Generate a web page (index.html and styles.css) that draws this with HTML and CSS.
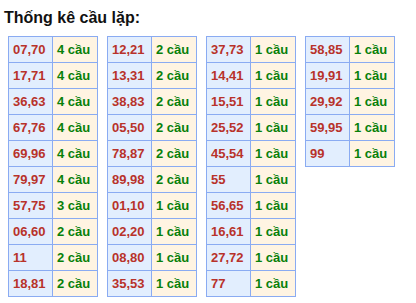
FILE: index.html
```html
<!DOCTYPE html>
<html lang="vi">
<head>
<meta charset="utf-8">
<link rel="stylesheet" href="styles.css">
</head>
<body>
<h3 class="title">Thống kê cầu lặp:</h3>
<div class="tables">
  <table class="stat">
    <tr><td class="num">07,70</td><td class="cnt">4 cầu</td></tr>
    <tr><td class="num">17,71</td><td class="cnt">4 cầu</td></tr>
    <tr><td class="num">36,63</td><td class="cnt">4 cầu</td></tr>
    <tr><td class="num">67,76</td><td class="cnt">4 cầu</td></tr>
    <tr><td class="num">69,96</td><td class="cnt">4 cầu</td></tr>
    <tr><td class="num">79,97</td><td class="cnt">4 cầu</td></tr>
    <tr><td class="num">57,75</td><td class="cnt">3 cầu</td></tr>
    <tr><td class="num">06,60</td><td class="cnt">2 cầu</td></tr>
    <tr><td class="num">11</td><td class="cnt">2 cầu</td></tr>
    <tr><td class="num">18,81</td><td class="cnt">2 cầu</td></tr>
  </table>
  <table class="stat">
    <tr><td class="num">12,21</td><td class="cnt">2 cầu</td></tr>
    <tr><td class="num">13,31</td><td class="cnt">2 cầu</td></tr>
    <tr><td class="num">38,83</td><td class="cnt">2 cầu</td></tr>
    <tr><td class="num">05,50</td><td class="cnt">2 cầu</td></tr>
    <tr><td class="num">78,87</td><td class="cnt">2 cầu</td></tr>
    <tr><td class="num">89,98</td><td class="cnt">2 cầu</td></tr>
    <tr><td class="num">01,10</td><td class="cnt">1 cầu</td></tr>
    <tr><td class="num">02,20</td><td class="cnt">1 cầu</td></tr>
    <tr><td class="num">08,80</td><td class="cnt">1 cầu</td></tr>
    <tr><td class="num">35,53</td><td class="cnt">1 cầu</td></tr>
  </table>
  <table class="stat">
    <tr><td class="num">37,73</td><td class="cnt">1 cầu</td></tr>
    <tr><td class="num">14,41</td><td class="cnt">1 cầu</td></tr>
    <tr><td class="num">15,51</td><td class="cnt">1 cầu</td></tr>
    <tr><td class="num">25,52</td><td class="cnt">1 cầu</td></tr>
    <tr><td class="num">45,54</td><td class="cnt">1 cầu</td></tr>
    <tr><td class="num">55</td><td class="cnt">1 cầu</td></tr>
    <tr><td class="num">56,65</td><td class="cnt">1 cầu</td></tr>
    <tr><td class="num">16,61</td><td class="cnt">1 cầu</td></tr>
    <tr><td class="num">27,72</td><td class="cnt">1 cầu</td></tr>
    <tr><td class="num">77</td><td class="cnt">1 cầu</td></tr>
  </table>
  <table class="stat">
    <tr><td class="num">58,85</td><td class="cnt">1 cầu</td></tr>
    <tr><td class="num">19,91</td><td class="cnt">1 cầu</td></tr>
    <tr><td class="num">29,92</td><td class="cnt">1 cầu</td></tr>
    <tr><td class="num">59,95</td><td class="cnt">1 cầu</td></tr>
    <tr><td class="num">99</td><td class="cnt">1 cầu</td></tr>
  </table>
</div>
</body>
</html>
```
FILE: styles.css
```css
html, body {
  margin: 0;
  padding: 0;
  background: #ffffff;
}
body {
  font-family: "Liberation Sans", Arial, sans-serif;
  padding: 0 8px;
}
.title {
  margin: 0;
  padding: 8px 0 0 0;
  margin-left: -4px;
  font-size: 16px;
  line-height: 19px;
  font-weight: bold;
  color: #111111;
}
.tables {
  display: flex;
  align-items: flex-start;
  gap: 9px;
  margin-top: 9px;
}
.stat {
  border-collapse: collapse;
  width: 90px;
  table-layout: fixed;
}
.stat td {
  border: 1px solid #8aabf2;
  height: 26px;
  padding: 0 0 0 4px;
  font-size: 13px;
  font-weight: bold;
  box-sizing: border-box;
  white-space: nowrap;
}
.stat .num {
  width: 44px;
  background: #e2eefe;
  color: #b8322a;
}
.stat .cnt {
  background: #fff4e2;
  color: #08800a;
}
```
